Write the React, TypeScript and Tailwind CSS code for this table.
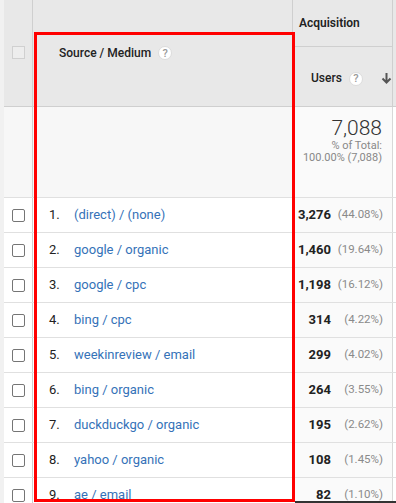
import React from 'react';

interface Row {
  label: string;
  users: string;
  pct: string;
}

const ROWS: Row[] = [
  { label: '(direct) / (none)', users: '3,276', pct: '(44.08%)' },
  { label: 'google / organic', users: '1,460', pct: '(19.64%)' },
  { label: 'google / cpc', users: '1,198', pct: '(16.12%)' },
  { label: 'bing / cpc', users: '314', pct: '(4.22%)' },
  { label: 'weekinreview / email', users: '299', pct: '(4.02%)' },
  { label: 'bing / organic', users: '264', pct: '(3.55%)' },
  { label: 'duckduckgo / organic', users: '195', pct: '(2.62%)' },
  { label: 'yahoo / organic', users: '108', pct: '(1.45%)' },
  { label: 'ae / email', users: '82', pct: '(1.10%)' },
];

function Help() {
  return (
    <span className="inline-flex h-[14px] w-[14px] items-center justify-center rounded-full border border-[#dcdcdc] bg-white text-[11px] font-medium leading-none text-[#9a9a9a]">
      ?
    </span>
  );
}

export default function App() {
  return (
    <div
      className="relative h-[503px] w-[396px] overflow-hidden bg-[#f1f1f1] text-[#222]"
      style={{ fontFamily: 'Roboto, Arial, sans-serif' }}
    >
      <div className="ml-[4px] flex flex-col">
        {/* header */}
        <div className="flex h-[107px] border-b border-[#cfcfcf] bg-[#e8e8e8]">
          <div className="flex w-[29px] shrink-0 justify-center border-r border-[#cfcfcf] pt-[46px]">
            <span className="h-[13px] w-[13px] border border-[#d0d0d0] bg-[#ededed]" />
          </div>
          <div className="flex w-[259px] shrink-0 items-start gap-[7px] pl-[26px] pt-[46px] text-[12px] font-medium">
            <span className="leading-[14px]">Source / Medium</span>
            <Help />
          </div>
          <div className="flex w-[101px] shrink-0 flex-col border-l border-r border-[#cfcfcf]">
            <div className="flex h-[47px] items-center border-b border-[#cfcfcf] pl-[6px] text-[12px] font-semibold">
              Acquisition
            </div>
            <div className="flex flex-1 items-center pl-[18px] pt-[3px] text-[12px] font-medium">
              <span>Users</span>
              <span className="ml-[7px]">
                <Help />
              </span>
              <svg className="ml-[18px]" width="11" height="12" viewBox="0 0 11 12">
                <path d="M5.5 1v9M1.5 6.5l4 4 4-4" stroke="#555" strokeWidth="2" fill="none" />
              </svg>
            </div>
          </div>
          <div className="flex-1" />
        </div>

        {/* summary */}
        <div className="flex h-[91px] border-b border-[#e0e0e0] bg-[#f7f7f7]">
          <div className="w-[29px] shrink-0 border-r border-[#cfcfcf]" />
          <div className="w-[259px] shrink-0" />
          <div className="flex w-[101px] shrink-0 flex-col items-end border-r border-[#d8d8d8] bg-[#fafafa] pr-[10px] pt-[9px]">
            <span className="text-[21px] font-light leading-[24px] text-[#333]">7,088</span>
            <span className="text-[11px] leading-[12px] text-[#888]">% of Total:</span>
            <span className="text-[11px] leading-[12px] text-[#888]">100.00% (7,088)</span>
          </div>
          <div className="flex-1 bg-white" />
        </div>

        {/* rows */}
        {ROWS.map((r, i) => (
          <div key={r.label} className="flex h-[35px] border-b border-[#e0e0e0] bg-white">
            <div className="flex w-[29px] shrink-0 items-center justify-center border-r border-[#cfcfcf] bg-white">
              <span className="h-[13px] w-[13px] rounded-[2px] border-[1.5px] border-[#757575]" />
            </div>
            <div className="flex w-[259px] shrink-0 items-center text-[13px]">
              <span className="w-[41px] pl-[16px] text-[#222]">{i + 1}.</span>
              <span className="text-[#3572b8]">{r.label}</span>
            </div>
            <div className="flex w-[101px] shrink-0 items-center justify-end border-r border-[#d8d8d8] bg-[#fafafa] pr-[9px]">
              <span className="text-[13px] font-bold text-[#222]">{r.users}</span>
              <span className="w-[52px] text-right text-[11.5px] text-[#8a8a8a]">{r.pct}</span>
            </div>
            <div className="flex-1 bg-white" />
          </div>
        ))}
      </div>

      {/* highlight box */}
      <div className="absolute left-[34px] top-[32px] h-[470px] w-[261px] border-[3px] border-[#ff0000]" />
      <div className="absolute bottom-0 left-[295px] h-[2px] w-[101px] bg-[#333]" />
    </div>
  );
}
